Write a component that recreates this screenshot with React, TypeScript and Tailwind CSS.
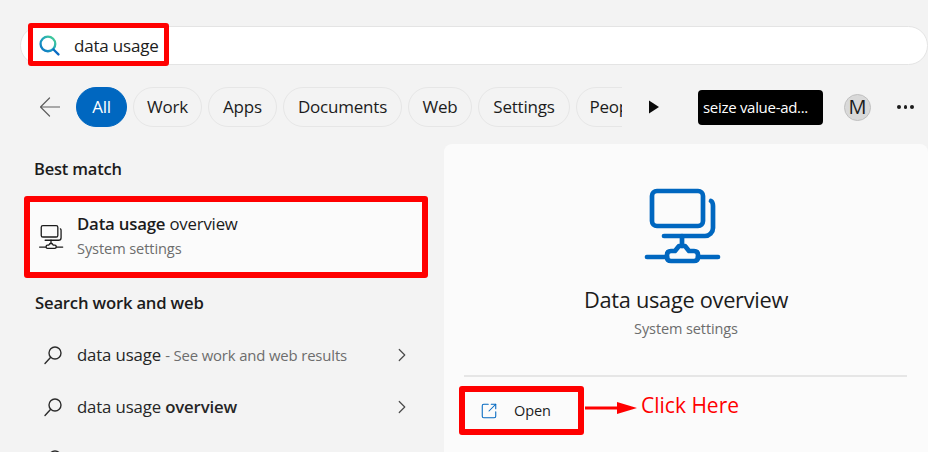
import { ChevronRight, SquareArrowOutUpRight } from 'lucide-react';

const chips = [
  { label: 'All', width: 'w-[51px]', active: true },
  { label: 'Work', width: 'w-[69px]' },
  { label: 'Apps', width: 'w-[69px]' },
  { label: 'Documents', width: 'w-[119px]' },
  { label: 'Web', width: 'w-[64px]' },
  { label: 'Settings', width: 'w-[92px]' },
  { label: 'People', width: 'w-[80px]' },
];

function NetworkIcon({ className, stroke = 4 }: { className: string; stroke?: number }) {
  return (
    <svg viewBox="0 0 80 80" fill="none" stroke="currentColor" strokeWidth={stroke} strokeLinecap="round" strokeLinejoin="round" className={className}>
      <rect x="10" y="5" width="51" height="35" rx="5" />
      <path d="M69 15c1.500 .8 2 2.500 2 5v22a8 8 0 0 1-8 8H22" />
      <path d="M40 50v10" />
      <path d="M5 71h20M56 71h20" />
      <path d="M29 65h4l4-5h6l4 5h5q4 0 4 4v2q0 4-4 4H29q-4 0-4-4v-2q0-4 4-4z" />
    </svg>
  );
}

function SmallSearch() {
  return (
    <svg viewBox="0 0 20 20" fill="none" stroke="#2b2b2b" strokeWidth="1.400" strokeLinecap="round" className="h-[20px] w-[20px] shrink-0">
      <circle cx="12" cy="8" r="6" />
      <path d="M7.700 12.300 2 18.500" />
    </svg>
  );
}

function ResultRow({ children }: { children: React.ReactNode }) {
  return (
    <div className="flex h-[52px] items-center pl-[43px] pr-[15px]">
      <SmallSearch />
      <div className="ml-[14px] flex-1 whitespace-nowrap text-[16.800px] tracking-[-0.15px] text-[#262626]">{children}</div>
      <ChevronRight size={22} strokeWidth={1.300} className="text-[#4a4a4a]" />
    </div>
  );
}

export default function App() {
  return (
    <div className="relative h-[452px] w-[928px] overflow-hidden bg-[#f3f3f3] font-['Open_Sans','Noto_Sans',sans-serif] text-[#1c1c1c]">
      {/* search bar */}
      <div className="pt-[26px]">
        <div className="relative ml-[20px] flex h-[39px] items-center rounded-l-[20px] rounded-r-[20px] border border-[#e4e4e4] bg-white pl-[18px]">
          <svg viewBox="0 0 20 20" fill="none" strokeWidth="2.200" strokeLinecap="round" className="h-[21px] w-[21px] shrink-0">
            <defs>
              <linearGradient id="lens" x1="1" y1="16" x2="16" y2="1" gradientUnits="userSpaceOnUse">
                <stop offset="0" stopColor="#0a6cc4" />
                <stop offset="0.450" stopColor="#1b9fc0" />
                <stop offset="1" stopColor="#4fd88c" />
              </linearGradient>
            </defs>
            <circle cx="8.500" cy="8.500" r="7" stroke="url(#lens)" />
            <path d="M13.800 13.800 18.500 18.500" stroke="#0a6cc4" />
          </svg>
          <span className="ml-[14px] text-[17px] tracking-[-0.2px]">data usage</span>
          <div className="absolute left-[7px] top-[-4px] h-[43px] w-[141px] rounded-[3px] border-[5px] border-[#ff0000]" />
        </div>
      </div>

      {/* filter row */}
      <div className="mt-[22px] flex h-[40px] items-center pl-[40px]">
        <svg viewBox="0 0 20 20" fill="none" stroke="#5f5f5f" strokeWidth="1.200" strokeLinecap="round" strokeLinejoin="round" className="h-[20px] w-[20px]">
          <path d="M0.500 10H20M9.500 1 .5 10l9 9" />
        </svg>
        <div className="ml-[16px] flex w-[546px] gap-[6px] overflow-hidden">
          {chips.map(chip => (
            <div
              key={chip.label}
              className={`flex h-[40px] shrink-0 items-center justify-center rounded-full border text-[17px] tracking-[-0.2px] ${chip.width} ${chip.active ? 'border-[#0067c0] bg-[#0067c0] text-white' : 'border-[#e6e6e6] text-[#1c1c1c]'}`}
            >
              {chip.label}
            </div>
          ))}
        </div>
        <svg viewBox="0 0 11 14" className="ml-[26px] h-[14px] w-[11px]" fill="#0a0a0a">
          <path d="M1 0.500 11 7 1 13.500z" />
        </svg>
        <div className="ml-[39px] flex h-[35px] w-[125px] items-center rounded-[4px] bg-black pl-[5px] text-[15px] tracking-[-0.3px] text-white">
          seize value-ad...
        </div>
        <div className="ml-[21px] flex h-[27px] w-[27px] items-center justify-center rounded-full border border-[#c0c0c0] bg-[#d9d9d9] text-[20px] leading-none">M</div>
        <div className="ml-[26px] flex gap-[3px]">
          <span className="h-[3.500px] w-[3.500px] rounded-full bg-[#1c1c1c]" />
          <span className="h-[3.500px] w-[3.500px] rounded-full bg-[#1c1c1c]" />
          <span className="h-[3.500px] w-[3.500px] rounded-full bg-[#1c1c1c]" />
        </div>
      </div>

      <div className="mt-[17px] flex">
        {/* results */}
        <div className="w-[444px] shrink-0">
          <div className="ml-[34px] mt-[13px] h-[24px] text-[16.500px] font-semibold leading-[24px] tracking-[-0.2px]">Best match</div>
          <div className="ml-[24px] mt-[15px] flex h-[82px] w-[404px] items-center rounded-[3px] border-[6px] border-[#ff0000] bg-[#fbfbfb] pl-[8px]">
            <NetworkIcon className="h-[26px] w-[26px] shrink-0 text-[#1c1c1c]" />
            <div className="ml-[13px] mt-[-3px]">
              <div className="text-[16.800px] leading-[25px] tracking-[-0.2px]">
                <span className="font-semibold">Data usage</span> overview
              </div>
              <div className="text-[14.600px] leading-[24px] tracking-[-0.1px] text-[#6d6d6d]">System settings</div>
            </div>
          </div>
          <div className="ml-[35px] mt-[13px] h-[24px] text-[16.700px] font-semibold leading-[24px] tracking-[-0.2px]">Search work and web</div>
          <div className="mt-[14px] w-[428px]">
            <ResultRow>
              data usage <span className="text-[14.900px] text-[#6d6d6d]">- See work and web results</span>
            </ResultRow>
            <ResultRow>
              data usage <span className="font-semibold">overview</span>
            </ResultRow>
            <ResultRow>
              <span />
            </ResultRow>
          </div>
        </div>

        {/* preview panel */}
        <div className="h-[320px] flex-1 rounded-t-[8px] bg-[#fbfbfb] pt-[42px]">
          <div className="flex flex-col items-center">
            <NetworkIcon stroke={4.700} className="ml-[-9px] h-[80px] w-[80px] text-[#0067c0]" />
            <div className="mt-[19px] text-[21.800px] leading-[30px] tracking-[-0.3px] text-[#1c1c1c]">Data usage overview</div>
            <div className="mt-[4px] text-[14.500px] leading-[20px] tracking-[-0.1px] text-[#6d6d6d]">System settings</div>
          </div>
          <div className="ml-[20px] mr-[21px] mt-[36px] h-[2px] bg-[#e6e6e6]" />
          <div className="relative ml-[15px] mt-[9px] flex h-[49px] w-[125px] items-center rounded-[3px] border-[6px] border-[#ff0000] pl-[15px]">
            <SquareArrowOutUpRight size={18} strokeWidth={1.400} className="text-[#0067c0]" />
            <span className="ml-[16px] mt-[1px] text-[14.500px] tracking-[-0.1px] text-[#1c1c1c]">Open</span>
            {/* click here annotation */}
            <div className="absolute left-[120px] top-[7px] flex items-center whitespace-nowrap">
              <svg viewBox="0 0 52 14" className="h-[14px] w-[52px]" fill="#ff0000">
                <path d="M0 5.500h32V1l20 6-20 6V8.500H0z" />
              </svg>
              <span className="ml-[4px] mt-[-4px] text-[21px] leading-none text-[#ff0000]">Click Here</span>
            </div>
          </div>
        </div>
      </div>
    </div>
  );
}
